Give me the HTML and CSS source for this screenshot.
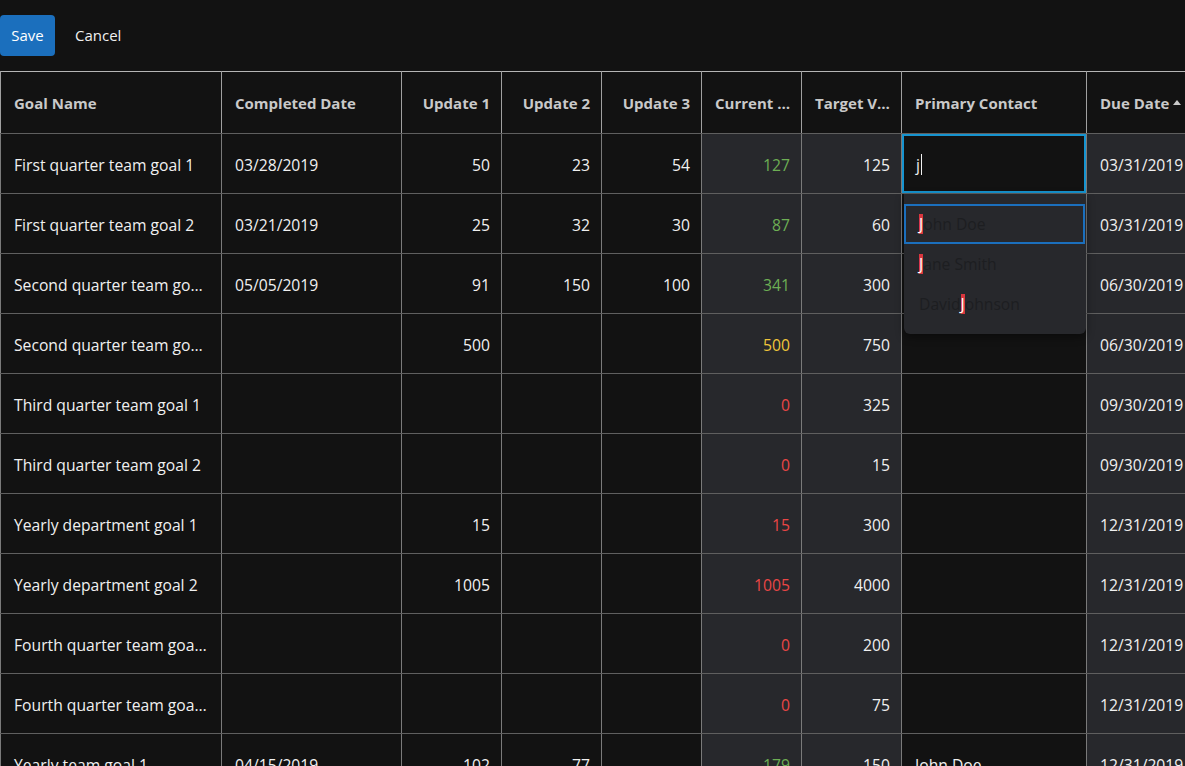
FILE: index.html
```html
<!DOCTYPE html>
<html lang="en">
<head>
<meta charset="utf-8">
<title>Goals</title>
<link rel="stylesheet" href="styles.css">
</head>
<body>
<div class="toolbar">
  <button class="btn btn-primary">Save</button>
  <button class="btn btn-flat">Cancel</button>
</div>
<div class="grid-wrap">
<table class="grid">
  <colgroup>
    <col class="c-name"><col class="c-date"><col class="c-num"><col class="c-num"><col class="c-num"><col class="c-num"><col class="c-num"><col class="c-contact"><col class="c-due">
  </colgroup>
  <thead>
    <tr>
      <th>Goal Name</th>
      <th>Completed Date</th>
      <th class="r">Update 1</th>
      <th class="r">Update 2</th>
      <th class="r">Update 3</th>
      <th class="r">Current Value</th>
      <th class="r">Target Value</th>
      <th>Primary Contact</th>
      <th class="sorted">Due Date <span class="sort-arrow"></span></th>
    </tr>
  </thead>
  <tbody>
    <tr>
      <td>First quarter team goal 1</td><td>03/28/2019</td><td class="r">50</td><td class="r">23</td><td class="r">54</td>
      <td class="r calc good">127</td><td class="r calc">125</td>
      <td class="editing">
        <div class="editor"><span class="typed">j</span><span class="caret"></span></div>
        <div class="popup">
          <div class="opt active"><mark>J</mark>ohn Doe</div>
          <div class="opt"><mark>J</mark>ane Smith</div>
          <div class="opt">David <mark>J</mark>ohnson</div>
        </div>
      </td>
      <td class="sorted">03/31/2019</td>
    </tr>
    <tr>
      <td>First quarter team goal 2</td><td>03/21/2019</td><td class="r">25</td><td class="r">32</td><td class="r">30</td>
      <td class="r calc good">87</td><td class="r calc">60</td><td></td><td class="sorted">03/31/2019</td>
    </tr>
    <tr>
      <td>Second quarter team goal 1</td><td>05/05/2019</td><td class="r">91</td><td class="r">150</td><td class="r">100</td>
      <td class="r calc good">341</td><td class="r calc">300</td><td></td><td class="sorted">06/30/2019</td>
    </tr>
    <tr>
      <td>Second quarter team goal 2</td><td></td><td class="r">500</td><td></td><td></td>
      <td class="r calc warn">500</td><td class="r calc">750</td><td></td><td class="sorted">06/30/2019</td>
    </tr>
    <tr>
      <td>Third quarter team goal 1</td><td></td><td></td><td></td><td></td>
      <td class="r calc bad">0</td><td class="r calc">325</td><td></td><td class="sorted">09/30/2019</td>
    </tr>
    <tr>
      <td>Third quarter team goal 2</td><td></td><td></td><td></td><td></td>
      <td class="r calc bad">0</td><td class="r calc">15</td><td></td><td class="sorted">09/30/2019</td>
    </tr>
    <tr>
      <td>Yearly department goal 1</td><td></td><td class="r">15</td><td></td><td></td>
      <td class="r calc bad">15</td><td class="r calc">300</td><td></td><td class="sorted">12/31/2019</td>
    </tr>
    <tr>
      <td>Yearly department goal 2</td><td></td><td class="r">1005</td><td></td><td></td>
      <td class="r calc bad">1005</td><td class="r calc">4000</td><td></td><td class="sorted">12/31/2019</td>
    </tr>
    <tr>
      <td>Fourth quarter team goal 1</td><td></td><td></td><td></td><td></td>
      <td class="r calc bad">0</td><td class="r calc">200</td><td></td><td class="sorted">12/31/2019</td>
    </tr>
    <tr>
      <td>Fourth quarter team goal 2</td><td></td><td></td><td></td><td></td>
      <td class="r calc bad">0</td><td class="r calc">75</td><td></td><td class="sorted">12/31/2019</td>
    </tr>
    <tr>
      <td>Yearly team goal 1</td><td>04/15/2019</td><td class="r">102</td><td class="r">77</td><td></td>
      <td class="r calc good">179</td><td class="r calc">150</td><td>John Doe</td><td class="sorted">12/31/2019</td>
    </tr>
  </tbody>
</table>
</div>
</body>
</html>
```

FILE: styles.css
```css
html, body {
  margin: 0;
  padding: 0;
  background: #121212;
  overflow: hidden;
  height: 100%;
}
body {
  font-family: "Open Sans", "Noto Sans", sans-serif;
  font-size: 15.7px;
  color: #f0f0f0;
}
.toolbar {
  height: 71px;
  display: flex;
  align-items: center;
  box-sizing: border-box;
  padding-bottom: 1px;
}
.btn {
  font-family: inherit;
  font-size: 15px;
  border: 0;
  height: 41px;
  border-radius: 4px;
  padding: 0 10px;
  cursor: pointer;
}
.btn-primary {
  background: #1b6fbd;
  color: #ffffff;
  width: 55px;
}
.btn-flat {
  background: transparent;
  color: #f0f0f0;
  margin-left: 10px;
}
.grid-wrap {
  width: 1206px;
}
.grid {
  table-layout: fixed;
  border-collapse: collapse;
  width: 1206px;
  border-top: 1px solid #b5b5b5;
  border-left: 1px solid #b5b5b5;
}
.c-name { width: 221px; }
.c-date { width: 180px; }
.c-num { width: 100px; }
.c-contact { width: 185px; }
.c-due { width: 120px; }
.grid th, .grid td {
  height: 57px;
  padding: 2px 13px 0 13px;
  white-space: nowrap;
  overflow: hidden;
  text-overflow: ellipsis;
  vertical-align: middle;
  text-align: left;
  border-left: 1px solid #7a7a7a;
  border-bottom: 1px solid #5f5f5f;
}
.grid th {
  height: 61px;
  padding-top: 0;
  font-size: 15px;
  font-weight: 700;
  color: #c9c9c9;
  background: #121212;
  border-left-color: #a0a0a0;
}
.grid .r { text-align: right; padding-right: 11px; }
.grid td.calc { background: #27282c; }
.grid td.sorted { background: #27282c; }
.good { color: #6dae54; }
.warn { color: #f0c53a; }
.bad { color: #ea4646; }
.sort-arrow {
  display: inline-block;
  width: 0;
  height: 0;
  border-left: 4px solid transparent;
  border-right: 4px solid transparent;
  border-bottom: 5px solid #c9c9c9;
  vertical-align: middle;
  position: relative;
  top: -2px;
}
.grid td.editing {
  padding: 0;
  overflow: visible;
  position: relative;
}
.editor {
  box-sizing: border-box;
  height: 59px;
  border: 2px solid #1694d0;
  background: #121212;
  display: flex;
  align-items: center;
  padding-left: 12px;
  padding-top: 2px;
}
.typed { color: #f0f0f0; }
.caret {
  display: inline-block;
  width: 1px;
  height: 21px;
  background: #f0f0f0;
  margin-left: 1px;
}
.popup {
  position: absolute;
  top: 60px;
  left: 2px;
  width: 182px;
  box-sizing: border-box;
  background: #27282c;
  border-radius: 0 0 6px 6px;
  padding: 10px 0;
  z-index: 5;
  box-shadow: 0 3px 8px rgba(0,0,0,0.4);
}
.opt {
  box-sizing: border-box;
  height: 40px;
  display: flex;
  align-items: center;
  padding-left: 13px;
  color: #1d1e21;
  border: 2px solid transparent;
  width: 181px;
}
.opt.active {
  border-color: #1b6fbd;
}
.opt mark {
  background: #d9363e;
  color: #ffffff;
  padding: 0;
  line-height: 20px;
  display: inline-block;
}
```
